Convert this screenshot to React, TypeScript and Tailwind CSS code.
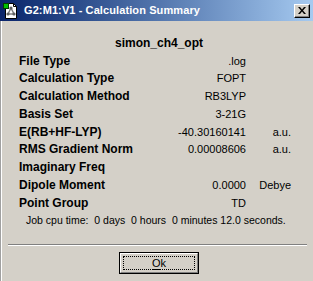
const rows: [string, string, string][] = [
  ['File Type', '.log', ''],
  ['Calculation Type', 'FOPT', ''],
  ['Calculation Method', 'RB3LYP', ''],
  ['Basis Set', '3-21G', ''],
  ['E(RB+HF-LYP)', '-40.30160141', 'a.u.'],
  ['RMS Gradient Norm', '0.00008606', 'a.u.'],
  ['Imaginary Freq', '', ''],
  ['Dipole Moment', '0.0000', 'Debye'],
  ['Point Group', 'TD', ''],
]

function TitleIcon() {
  return (
    <svg width="16" height="16" viewBox="0 0 16 16" className="shrink-0">
      <path d="M2.5 0.5h8l3 3v12h-11z" fill="#fff" stroke="#000" />
      <path d="M10.5 0.5v3h3" fill="none" stroke="#000" />
      <line x1="8" y1="5" x2="5" y2="11" stroke="#808080" strokeWidth="1.5" />
      <line x1="8" y1="5" x2="11" y2="11" stroke="#808080" strokeWidth="1.5" />
      <line x1="5" y1="11" x2="11" y2="11" stroke="#808080" strokeWidth="1.5" />
      <circle cx="8" cy="5" r="1.6" fill="#606060" />
      <circle cx="5" cy="11" r="1.6" fill="#606060" />
      <circle cx="11" cy="11" r="1.6" fill="#606060" />
      <rect x="0.5" y="0.5" width="5" height="5" fill="#00c000" stroke="#004000" />
    </svg>
  )
}

export default function App() {
  return (
    <div className="w-[313px] h-[281px] overflow-hidden bg-[#d4d0c8] text-black font-['Liberation_Sans',Arial,sans-serif] text-[11px] flex flex-col">
      {/* title bar */}
      <div className="h-[21px] shrink-0 flex items-center pl-[3px] pr-[3px] bg-gradient-to-r from-[#0a246a] to-[#a6caf0]">
        <TitleIcon />
        <span className="ml-[5px] text-white font-bold text-[11px] tracking-[0.1px]">
          G2:M1:V1 - Calculation Summary
        </span>
        <div className="ml-auto w-[16px] h-[14px] bg-[#d4d0c8] border-t border-l border-white border-r border-b border-r-black border-b-black shadow-[inset_-1px_-1px_0_#808080] flex items-center justify-center">
          <svg width="8" height="7" viewBox="0 0 8 7">
            <path d="M0 0h2l2 2.5L6 0h2L5 3.5 8 7H6L4 4.5 2 7H0l3-3.5z" fill="#000" />
          </svg>
        </div>
      </div>

      <div className="flex-1 flex border-l border-[#a0a0a0]">
        <div className="flex-1 flex flex-col border-l border-white pl-[1px]">
          <div className="h-[14px]" />
          <div className="text-center font-bold text-[12px] pl-[2px] leading-[17px]">simon_ch4_opt</div>
          <div className="grid grid-cols-[127px_100px_45px] pl-[16px] mt-[0.5px]">
            {rows.map(([label, value, unit]) => (
              <div key={label} className="contents">
                <div className="h-[17.75px] leading-[17.75px] font-bold text-[12px] whitespace-nowrap">{label}</div>
                <div className="h-[17.75px] leading-[17.75px] text-right">{value}</div>
                <div className="h-[17.75px] leading-[17.75px] text-right">{unit}</div>
              </div>
            ))}
          </div>
          <div className="h-[17.75px] leading-[17.75px] pl-[23px] text-[10.5px] whitespace-pre">
            Job cpu time:  0 days  0 hours  0 minutes 12.0 seconds.
          </div>
          <div className="mt-[14px] ml-[5px] mr-[6px] border-t border-[#808080] border-b border-b-white" />
          <div className="flex justify-center mt-[6px] pl-[2px]">
            <button className="w-[80px] h-[22px] border border-black bg-[#d4d0c8] p-0">
              <div className="w-full h-full border-t border-l border-white border-r border-b border-r-[#808080] border-b-[#808080] p-[2px]">
                <div className="w-full h-full border border-dotted border-black flex items-center justify-center">
                  <span>
                    <span className="underline underline-offset-[2px]">O</span>k
                  </span>
                </div>
              </div>
            </button>
          </div>
        </div>
      </div>
    </div>
  )
}
